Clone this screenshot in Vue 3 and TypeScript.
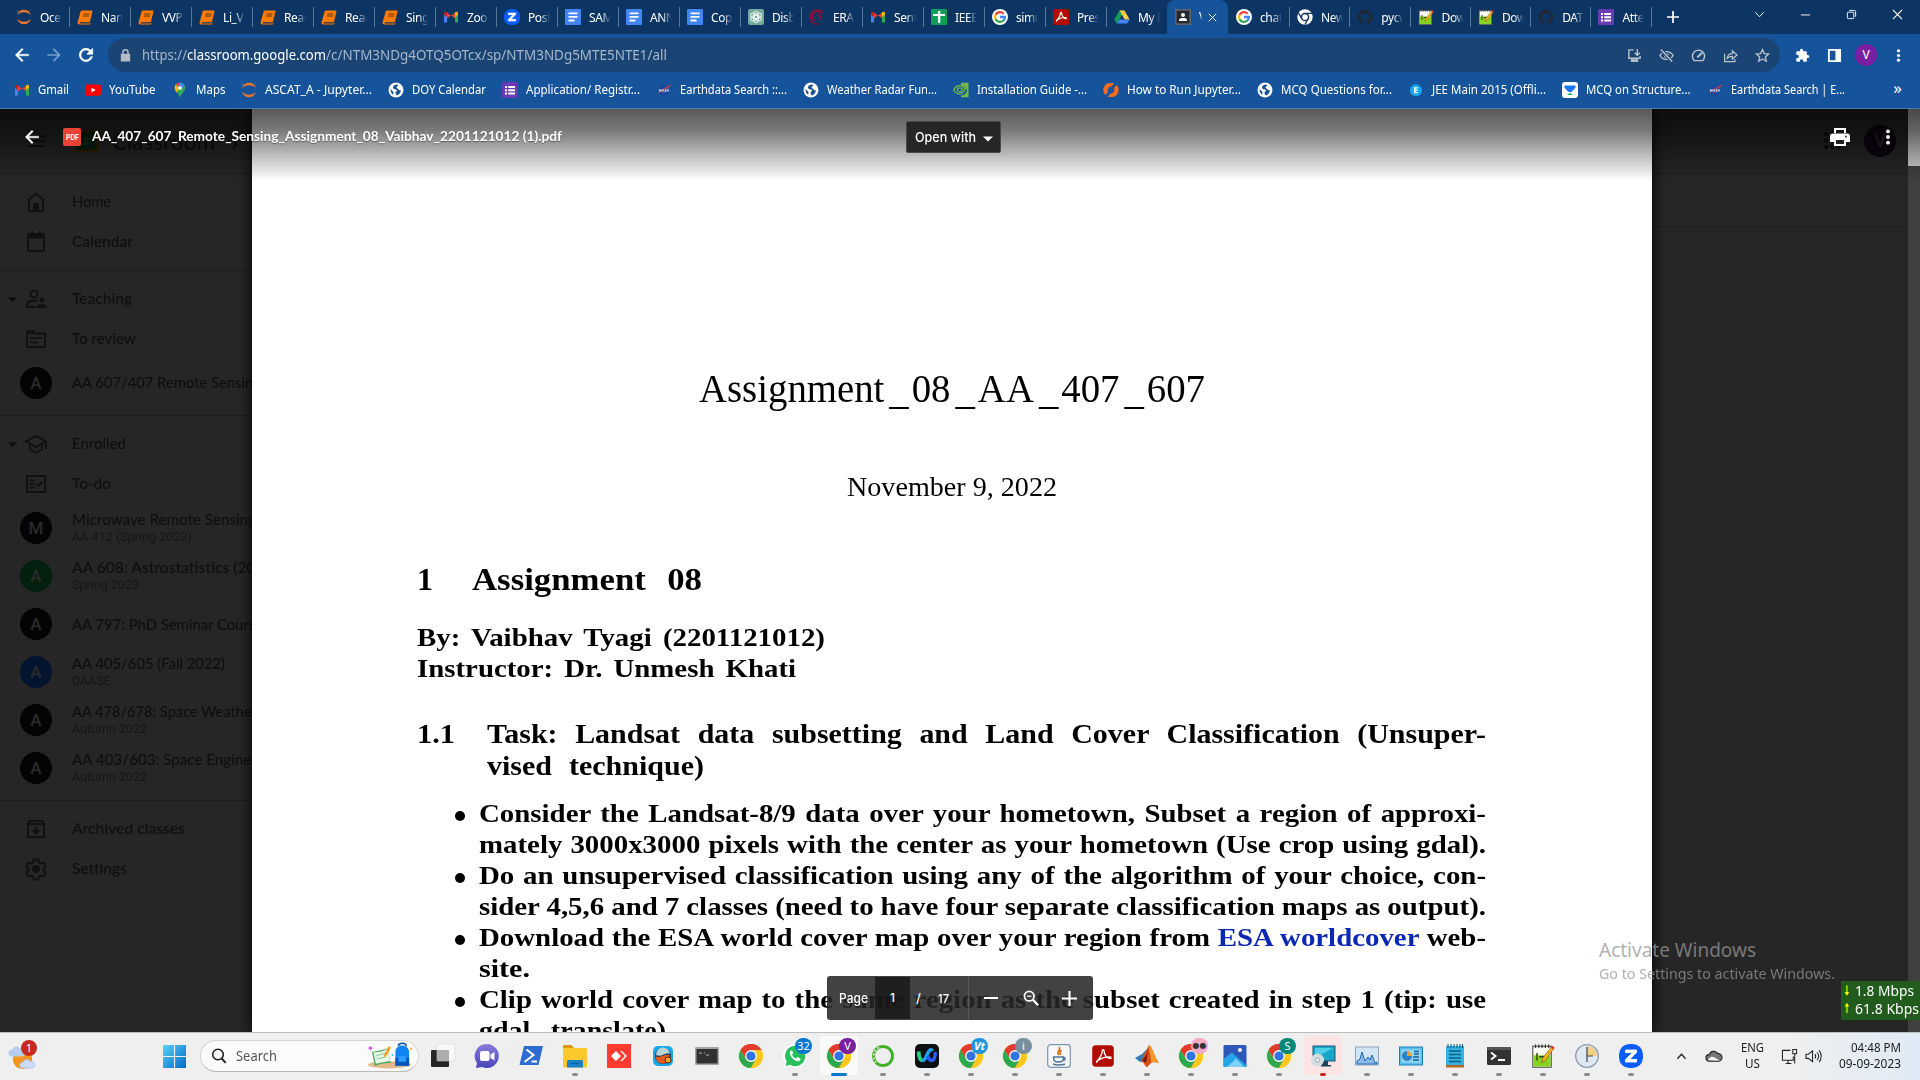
<script setup lang="ts">
interface Tab { icon: string; label: string; active?: boolean }
interface Bookmark { icon: string; label: string; w: number }
interface Course { letter: string; name: string; w: number; sub?: string; sw?: number; tone?: string }
interface App { icon: string; state?: string; badge?: string; tone?: string }

// Stretches a text run to a given width. With a second number the glyphs
// get that fixed stretch and the word gaps take up the rest of the line.
const vFit = {
  mounted(el: HTMLElement, binding: { value: number | number[] }) {
    const v = binding.value
    el.style.display = 'inline-block'
    el.style.whiteSpace = 'pre'
    el.style.transformOrigin = '0 50%'
    el.style.flex = 'none'
    let target: number
    if (Array.isArray(v)) {
      target = v[0]
      const gaps = (el.textContent || '').split(' ').length - 1
      const w = el.offsetWidth
      if (gaps > 0) el.style.wordSpacing = (target / v[1] - w) / gaps + 'px'
    } else {
      target = v
    }
    const natural = el.getBoundingClientRect().width
    el.style.transform = `scaleX(${target / natural})`
    el.style.marginRight = target - natural + 'px'
  },
}

const chrome = '<circle cx="12" cy="12" r="12" fill="#fbc116"/><path d="M12 12 1.6 6A12 12 0 0 1 22.4 6z" fill="#e33b2e"/><path d="M12 6h10.4A12 12 0 0 0 1.6 6L6.8 15z" fill="#e33b2e"/><path d="M1.6 6A12 12 0 0 0 12 24l5.2-9-5.2 3-5.2-3z" fill="#2da94f"/><path d="M22.4 6A12 12 0 0 1 12 24l5.2-9L17 9l-5-3z" fill="#fdc81c"/><circle cx="12" cy="12" r="5.9" fill="#fff"/><circle cx="12" cy="12" r="4.6" fill="#2f74e0"/>'
const git = '<path d="M8 .8a7.3 7.3 0 0 0-2.3 14.2c.4.1.5-.1.5-.4v-1.3c-2 .4-2.5-.9-2.5-.9-.4-.9-.8-1.1-.8-1.1-.7-.5 0-.5 0-.5.8.1 1.2.8 1.2.8.7 1.2 1.8.8 2.2.6.1-.5.3-.8.5-1-1.7-.2-3.4-.8-3.4-3.6 0-.8.3-1.5.8-2-.1-.2-.4-1 0-2 0 0 .7-.2 2.1.8a7 7 0 0 1 3.8 0c1.4-1 2-.8 2-.8.5 1 .2 1.8 0 2 .5.5.8 1.2.8 2 0 2.8-1.7 3.4-3.4 3.6.3.2.5.7.5 1.4v2c0 .3.2.5.5.4A7.3 7.3 0 0 0 8 .8z" fill="#22272e"/>'
const notepad = '<rect x="1.2" y="1.5" width="12.300" height="14" fill="#fbfcf7" stroke="#4a4a4a" stroke-width=".7"/><path d="M1.600 7.500h11.500v7.600H1.600z" fill="#86d321"/><path d="M3 .3v2.400M5.200.3v2.400M7.400.3v2.400M9.600.3v2.400M11.800.3v2.400" stroke="#333" stroke-width=".8"/><path d="M4 6v5M5.500 8.500h3.500" stroke="#33491c" stroke-width="1"/><path d="m7 12.500.8-3L14 1.500l1.500 1.100L9.500 11z" fill="#f4b316" stroke="#8a4d0c" stroke-width=".4"/><path d="m13.200 2.400.8-1.200 1.600 1.200-.8 1.100z" fill="#d93025"/>'
const nasa = '<circle cx="8" cy="8.500" r="5.300" fill="#17479e"/><path d="M2 11C6 7 10 6 14.500 3.200 11 6.500 9 9 6.500 11.500" fill="none" stroke="#e23b3b" stroke-width=".9"/><path d="M3.500 9.500V7.300L5 9.500V7.300M6 9.500l.9-2.200.9 2.200M10.300 7.300H9l1.200 2.200H8.700M11 9.500l.9-2.200.9 2.200" stroke="#fff" stroke-width=".7" fill="none"/>'

const icons: Record<string, [string, string]> = {
  jupyter: ['0 0 16 16', '<path d="M1 6.300C3-1 13-1 15 6.300 12 2.300 4 2.300 1 6.300zM1 9.700C3 17 13 17 15 9.700 12 13.700 4 13.700 1 9.700z" fill="#f37626"/><circle cx="1.800" cy="2.200" r=".7" fill="#888"/><circle cx="14" cy="1.300" r=".6" fill="#777"/>'],
  book: ['0 0 16 16', '<path d="M5 1.500h9.500c.8 0 1.100.4.9 1.200L13.200 12c-.2.8-.6 1.200-1.400 1.200H3.200c-.9 0-.9 1.200 0 1.200h9.400l.5-1 .6.1-.7 2H2.200C.8 15.500.3 14.500.6 13.300L3.500 3c.3-1 .7-1.500 1.500-1.500z" fill="#ff7a00"/><path d="M6.500 5h6M6 7h6" stroke="#5b3a1a" stroke-width="1"/>'],
  gmail: ['0 0 16 16', '<path d="M1 13.500V4.300l3 2.400v6.800z" fill="#4285f4"/><path d="M12 13.500V6.700l3-2.400v9.200z" fill="#34a853"/><path d="M4 10V4l4 3.200L12 4v6l-4-3.200z" fill="#ea4335" transform="translate(0 -.5)"/><path d="M1 4.500C1 2.500 2.600 2.200 4 3.300V8L1 5.700z" fill="#c5221f"/><path d="M12 3.300c1.500-1.100 3-.8 3 1.200v1.200L12 8z" fill="#fbbc04"/>'],
  zoomz: ['0 0 16 16', '<rect x="0" y="0" width="16" height="16" rx="7" fill="#0b5cff"/><path d="M4.300 4h7.400v1.600L7 10.300h4.700V12H4.300v-1.600L9 5.700H4.300z" fill="#fff" stroke="#fff" stroke-width=".6"/>'],
  doc: ['0 0 16 16', '<rect width="16" height="16" rx="1" fill="#4285f4"/><path d="M3.500 3.500h9v1.800h-9zM3.500 7h9v1.800h-9zM3.500 10.600h6v1.800h-6z" fill="#fff"/>'],
  gpt: ['0 0 16 16', '<rect width="16" height="16" rx="2" fill="#74aa9c"/><g fill="none" stroke="#e9f5f1" stroke-width="1"><ellipse cx="8" cy="6" rx="2.500" ry="3.800"/><ellipse cx="8" cy="6" rx="2.500" ry="3.800" transform="rotate(60 8 8)"/><ellipse cx="8" cy="6" rx="2.500" ry="3.800" transform="rotate(120 8 8)"/><ellipse cx="8" cy="6" rx="2.500" ry="3.800" transform="rotate(180 8 8)"/><ellipse cx="8" cy="6" rx="2.500" ry="3.800" transform="rotate(240 8 8)"/><ellipse cx="8" cy="6" rx="2.500" ry="3.800" transform="rotate(300 8 8)"/></g>'],
  era: ['0 0 16 16', '<g fill="none" stroke="#8c1138" stroke-width="1.500"><path d="M14 4A7 7 0 1 0 9 15"/><path d="M12 6a4.500 4.500 0 1 0-5 5.500M8 7c3-1 5 1 4 4"/></g>'],
  sheet: ['0 0 16 16', '<rect width="16" height="16" rx="1" fill="#0f9d58"/><rect x="2" y="5" width="12" height="2" fill="#fff"/><rect x="7" y="2" width="2.300" height="12" fill="#fff"/>'],
  google: ['0 0 16 16', '<circle cx="8" cy="8" r="8" fill="#fff"/><g fill="none" stroke-width="2.300"><path d="M11.600 4.700A4.900 4.900 0 0 0 3.600 5.800" stroke="#ea4335"/><path d="M3.700 5.600a5 5 0 0 0 0 4.800" stroke="#fbbc05"/><path d="M3.600 10.200a4.900 4.900 0 0 0 7.700 1.300" stroke="#34a853"/><path d="M8 8h4.900a4.900 4.900 0 0 1-1.700 3.700" stroke="#4285f4"/></g>'],
  acrobat: ['0 0 16 16', '<rect width="16" height="16" rx="1.500" fill="#b30b00"/><path d="M3.500 12c1.500-2 4-4.500 4-8 0-1 1.200-1 1.200 0 0 3 2 5.500 4 5.700 1 0 1-1.200-.4-1.200-3 0-6 1-8 2.300-1.200.8-1 1.700-.8 1.200z" fill="none" stroke="#fff" stroke-width="1.100"/>'],
  drive: ['0 0 16 16', '<path d="M5.500 1.500h5L5.300 10.500 2.800 14.500.3 10.400z" fill="#0f9d58"/><path d="M5.500 1.500h5l5.200 9h-5z" fill="#ffcd40"/><path d="M5.300 10.500h10.400l-2.500 4H2.800z" fill="#4285f4"/>'],
  classroom: ['0 0 16 16', '<rect width="16" height="16" fill="#5f6368"/><rect x="1.700" y="1.700" width="12.600" height="12.600" fill="#26292c"/><circle cx="8" cy="6" r="2" fill="#fff"/><path d="M4 12v-1c0-2.600 8-2.600 8 0v1z" fill="#fff"/>'],
  chromew: ['0 0 16 16', '<circle cx="8" cy="8" r="7.700" fill="#fff"/><circle cx="8" cy="8" r="3.600" fill="none" stroke="#14365f" stroke-width="1.500"/><path d="M8 4.400h7M4.900 9.800 1.500 4M11.100 9.800 8 15.500" stroke="#14365f" stroke-width="1.300"/>'],
  github: ['0 0 16 16', git],
  notepadpp: ['0 0 16 16', notepad],
  form: ['0 0 16 16', '<rect width="16" height="16" rx="1" fill="#673ab7"/><path d="M3 4h2v2H3zM6.200 4H13v2H6.200zM3 7.200h2v2H3zM6.200 7.200H13v2H6.200zM3 10.400h2v2H3zM6.200 10.400H13v2H6.200z" fill="#fff"/>'],
  youtube: ['0 0 16 16', '<rect x="0" y="2.500" width="16" height="11.300" rx="2.600" fill="#f00"/><path d="m6.500 5.700 4.200 2.400-4.200 2.400z" fill="#fff"/>'],
  maps: ['0 0 16 16', '<path d="M8 .5a5.300 5.300 0 0 0-5.300 5.300c0 3.500 4 5 5.300 10 1.300-5 5.300-6.500 5.300-10A5.300 5.300 0 0 0 8 .5z" fill="#34a853"/><path d="M2.700 6.500a5.300 5.300 0 0 1 1.200-4L8 6l-3.800 4.400z" fill="#fbbc04"/><path d="M4 2.300A5.300 5.300 0 0 1 8 .5l-2 5z" fill="#ea4335"/><path d="M8 .5a5.300 5.300 0 0 1 4.700 2.800L8.500 8 6 5z" fill="#4285f4"/><circle cx="8" cy="5.800" r="1.900" fill="#fff"/>'],
  globe: ['0 0 16 16', '<circle cx="8" cy="8" r="7.500" fill="#fff"/><path d="M9 2.500c-2 0-3.500 1-4 2.500-.4 1.500 1 2.300 3 2.600 1.500.3 1.500 1.600.3 1.900-1.300.4-1 2.500.7 4 2-1 3.500-2.500 4-5-2 .4-2.500-1.500-4-2.200C8 5.700 8.500 4.500 10.500 3.500zM2.500 7l3 3-.3 2.800C3.300 11.500 2.400 9.500 2.500 7z" fill="#17508f"/>'],
  nasa: ['0 0 16 16', nasa],
  nvidia: ['0 0 16 16', '<path d="M8 .8h7.500v14.500H8v-1.700c4-.2 5.500-2.500 6-5C12.500 5 11 3.500 8 3.300z" fill="#76b947"/><g fill="none" stroke="#76b947" stroke-width="1.300"><path d="M.8 8C3 3 9 2 12 7c-2 6-8 6.500-11.200 1z"/><path d="M4 8c1.500-3 4.500-2.500 5.500-.5C8 10.500 5.500 10.500 4 8z"/></g>'],
  saturn: ['0 0 16 16', '<path d="M2.500 13A7 7 0 0 1 8 1h3l-2 3.300A4 4 0 0 0 5 10zM13.500 3A7 7 0 0 1 8 15H5l2-3.300A4 4 0 0 0 11 6z" fill="#ff6b1a"/>'],
  jee: ['0 0 16 16', '<circle cx="8" cy="8.200" r="6" fill="#14a9ee"/><path d="M6 5.200h4v1.300H7.500v1H9.800v1.300H7.500v1.100H10v1.300H6z" fill="#fff"/>'],
  testbook: ['0 0 16 16', '<rect width="16" height="16" rx="3" fill="#fff"/><path d="M2.500 3.500h11v2.200L9.500 10h-3l-4-4.300z" fill="#1877f2"/><path d="m5 13 3-2.200L11 13z" fill="#19b36b"/>'],
  // browser toolbar
  back: ['0 0 24 24', '<path d="M20 11H7.800l5.600-5.600L12 4l-8 8 8 8 1.400-1.400L7.800 13H20z" fill="currentColor" stroke="currentColor" stroke-width=".5"/>'],
  fwd: ['0 0 24 24', '<path d="m12 4-1.400 1.400 5.600 5.600H4v2h12.200l-5.600 5.600L12 20l8-8z" fill="currentColor"/>'],
  reload: ['0 0 24 24', '<path d="M17.700 6.300A8 8 0 1 0 19.700 14h-2.100A6 6 0 1 1 16.200 7.800L13 11h7V4z" fill="currentColor" stroke="currentColor" stroke-width=".8"/>'],
  lock: ['0 0 16 16', '<path d="M4.500 6V4.500a3.500 3.500 0 0 1 7 0V6H13v8.500H3V6zm1.600 0h3.800V4.500a1.900 1.900 0 0 0-3.800 0z" fill="currentColor"/>'],
  install: ['0 0 16 16', '<path d="M7 2H2v9h12V8.500M4.500 14h7" fill="none" stroke="currentColor" stroke-width="1.500"/><path d="M11 1v6.500M8.300 5 11 7.700 13.700 5" fill="none" stroke="currentColor" stroke-width="1.500"/><path d="M4 12h8v2.500H4z" fill="currentColor"/>'],
  eyeoff: ['0 0 16 16', '<path d="M1 8c3-5.500 11-5.500 14 0-3 5.500-11 5.500-14 0z" fill="none" stroke="currentColor" stroke-width="1.500"/><circle cx="8" cy="8" r="2.700" fill="currentColor"/><path d="M2 1.500 14 14.500" stroke="#1a4474" stroke-width="3.500"/><path d="M2 1.500 14 14.500" stroke="currentColor" stroke-width="1.500"/>'],
  speed: ['0 0 16 16', '<path d="M3.500 13.500a6.500 6.500 0 1 1 9 0z" fill="none" stroke="currentColor" stroke-width="1.500"/><path d="m6.800 10 5-5" stroke="currentColor" stroke-width="2.200"/>'],
  share: ['0 0 16 16', '<path d="M1.700 6v8.500h11V12M4.500 11c.5-3.500 2.500-5 5.500-5V3l5 4.500-5 4.300V9C7.500 9 6 9.500 4.500 11z" fill="none" stroke="currentColor" stroke-width="1.300"/>'],
  star: ['0 0 16 16', '<path d="m8 1.700 1.900 4.300 4.600.4-3.500 3.100 1.100 4.600L8 11.700l-4.100 2.400L5 9.500 1.500 6.400 6.100 6z" fill="none" stroke="currentColor" stroke-width="1.400"/>'],
  puzzle: ['0 0 24 24', '<path d="M20.500 11H19V7a2 2 0 0 0-2-2h-4V3.500a2.500 2.500 0 0 0-5 0V5H4a2 2 0 0 0-2 2v3.800h1.500a2.700 2.700 0 0 1 0 5.400H2V20a2 2 0 0 0 2 2h3.800v-1.500a2.700 2.700 0 0 1 5.400 0V22H17a2 2 0 0 0 2-2v-4h1.500a2.500 2.500 0 0 0 0-5z" fill="currentColor"/>'],
  panel: ['0 0 16 16', '<path d="M1 1h14v14H1zm2 2v10h6V3z" fill="currentColor" fill-rule="evenodd"/>'],
  dots: ['0 0 16 16', '<circle cx="8" cy="3" r="1.700" fill="currentColor"/><circle cx="8" cy="8" r="1.700" fill="currentColor"/><circle cx="8" cy="13" r="1.700" fill="currentColor"/>'],
  chevdown: ['0 0 12 12', '<path d="m1.500 3.500 4.500 5 4.500-5" fill="none" stroke="currentColor" stroke-width="1"/>'],
  min: ['0 0 12 12', '<path d="M1 6.500h10" stroke="currentColor" stroke-width="1"/>'],
  restore: ['0 0 12 12', '<rect x="1.500" y="3.500" width="7" height="7" rx="1" fill="none" stroke="currentColor"/><path d="M3.500 1.500H9a1.500 1.500 0 0 1 1.500 1.500v5.500" fill="none" stroke="currentColor"/>'],
  close: ['0 0 12 12', '<path d="m1 1 10 10M11 1 1 11" stroke="currentColor" stroke-width="1.300"/>'],
  plus: ['0 0 12 12', '<path d="M6 0v12M0 6h12" stroke="currentColor" stroke-width="1.700"/>'],
  // classroom sidebar
  home: ['0 0 24 24', '<path d="M5 21V9.500L12 3.500l7 6V21z" fill="none" stroke="currentColor" stroke-width="2"/><path d="M9 13h6v8H9z" fill="currentColor"/>'],
  calendar: ['0 0 24 24', '<path d="M7 1v2H5a2 2 0 0 0-2 2v15c0 1.100.9 2 2 2h14a2 2 0 0 0 2-2V5a2 2 0 0 0-2-2h-2V1h-2v2H9V1zM5 8.500h14V20H5z" fill="currentColor" fill-rule="evenodd"/>'],
  people: ['0 0 24 24', '<g fill="none" stroke="currentColor" stroke-width="2"><circle cx="10" cy="7" r="3.500"/><path d="M13 14c-5-1-10 .5-10 4v2h8"/></g><circle cx="18" cy="13" r="2.500" fill="currentColor"/><path d="M12.500 21v-1.500c0-3 10-3 10 0V21z" fill="currentColor"/>'],
  review: ['0 0 24 24', '<path d="M3 20V4h6l2 2.500h10V20z" fill="none" stroke="currentColor" stroke-width="2"/><path d="M3 4h6l2 3H3zM6 10h12v2H6zM6 14.500h8v2H6z" fill="currentColor"/>'],
  school: ['0 0 24 24', '<path d="m2 9.500 10-5.500 10 5.500-10 5.500zM6 12v5.500l6 3.300 6-3.300V12M22 9.500V17" fill="none" stroke="currentColor" stroke-width="2"/>'],
  todo: ['0 0 24 24', '<rect x="3" y="4" width="18" height="16" fill="none" stroke="currentColor" stroke-width="2"/><path d="M5.500 7.500h5v2h-5zM5.500 11h5v2h-5zM5.500 14.500h5v2h-5z" fill="currentColor"/><path d="m12.500 12 2 2 4-4.300" fill="none" stroke="currentColor" stroke-width="2"/>'],
  archive: ['0 0 24 24', '<path d="M4 7v13h16V7zM4 7l1.500-3h13L20 7" fill="none" stroke="currentColor" stroke-width="2"/><path d="M12 9.500v6M9 13l3 3.200 3-3.200" fill="none" stroke="currentColor" stroke-width="2"/>'],
  gear: ['0 0 24 24', '<path d="m9.700 2.500-.5 2.800-2 1.200-2.700-1-2.300 4 2.200 1.800v2.400l-2.200 1.800 2.300 4 2.700-1 2 1.200.5 2.800h4.600l.5-2.800 2-1.200 2.700 1 2.300-4-2.200-1.800v-2.400l2.200-1.800-2.300-4-2.700 1-2-1.200-.5-2.800z" fill="none" stroke="currentColor" stroke-width="2" stroke-linejoin="round"/><circle cx="12" cy="12" r="4" fill="currentColor"/>'],
  caret: ['0 0 10 10', '<path d="M0 2.500h10L5 7.500z" fill="currentColor"/>'],
  burger: ['0 0 18 12', '<path d="M0 0h18v2H0zM0 5h18v2H0zM0 10h18v2H0z" fill="currentColor"/>'],
  logo: ['0 0 26 22', '<rect width="26" height="22" rx="2" fill="#2a2204"/><rect x="2.500" y="2.500" width="21" height="17" fill="#04200f"/><circle cx="13" cy="9" r="2.500" fill="#0f3520"/><path d="M8 15c0-4 10-4 10 0z" fill="#0f3520"/>'],
  grid: ['0 0 18 18', '<g fill="currentColor"><circle cx="2" cy="2" r="2"/><circle cx="8.500" cy="2" r="2"/><circle cx="15" cy="2" r="2"/><circle cx="2" cy="8.500" r="2"/><circle cx="8.500" cy="8.500" r="2"/><circle cx="15" cy="8.500" r="2"/><circle cx="2" cy="15" r="2"/><circle cx="8.500" cy="15" r="2"/><circle cx="15" cy="15" r="2"/></g>'],
  print: ['0 0 20 18', '<path d="M4 0h12v5H4zM3 5.500h14a3 3 0 0 1 3 3V14h-4v-3H4v3H0V8.500a3 3 0 0 1 3-3z" fill="#fff"/><path d="M6 2h8v3H6z" fill="#151515"/><path d="M4 10.500h12V18H4z" fill="#fff"/><path d="M6 12h8v4H6z" fill="#222"/><circle cx="16" cy="8.500" r="1" fill="#333"/>'],
  zoomout: ['0 0 20 20', '<circle cx="8" cy="8" r="5.300" fill="none" stroke="currentColor" stroke-width="2"/><path d="m12 12 6 6" stroke="currentColor" stroke-width="2.500"/><path d="M5.500 8h5" stroke="currentColor" stroke-width="1.300"/>'],
  // taskbar
  win: ['0 0 24 24', '<defs><linearGradient id="wg" x1="0" y1="0" x2="1" y2="1"><stop offset="0" stop-color="#5ad0fa"/><stop offset="1" stop-color="#0069c5"/></linearGradient></defs><path d="M0 0h11.400v11.400H0zM12.600 0H24v11.400H12.600zM0 12.600h11.400V24H0zM12.600 12.600H24V24H12.600z" fill="url(#wg)"/>'],
  weather: ['0 0 28 28', '<circle cx="14" cy="17" r="10" fill="#f7941d"/><path d="M3 14a3.500 3.500 0 0 1 0-7 5 5 0 0 1 9-1 4 4 0 0 1 1 8z" fill="#b7cdf0"/><path d="M14 26a3 3 0 0 1 0-6 4.500 4.500 0 0 1 8-1 3.500 3.500 0 0 1 2 7z" fill="#cbdaf5" stroke="#9bb4e0" stroke-width=".6"/>'],
  mag: ['0 0 16 16', '<circle cx="7" cy="6.500" r="5.300" fill="none" stroke="#222" stroke-width="1.600"/><path d="m10.700 10.500 4 4.300" stroke="#222" stroke-width="1.900"/>'],
  supplies: ['0 0 46 26', '<ellipse cx="22" cy="22" rx="22" ry="3.700" fill="#e3b98a"/><path d="m4 9 9-2 7-2 3 15-9 1-7 2z" fill="#4da765"/><path d="m5.500 9.500 8-1 6.500-3 2.500 12.500-7 1.500-7.500 1.500z" fill="#e8f6e4"/><path d="m8 13 10-3M9 16l9-2" stroke="#8ac79a" stroke-width="1"/><path d="m16 13 5-10 2.500 1.200L18 14z" fill="#f6a21d"/><path d="M31 3c0-4 8-4 8 0" stroke="#0a52ad" stroke-width="1.700" fill="none"/><path d="M28 9c0-9 14-9 14 0v14H28z" fill="#1184f5"/><path d="M28 15h14v8H28z" fill="#0757b9"/><rect x="31" y="13" width="8" height="6" rx="1" fill="#2d9bff"/><path d="M2.500 3v4M.5 5h4" stroke="#d45cf0" stroke-width="1.700"/><circle cx="44" cy="5.500" r="1.200" fill="#fdb81e"/><circle cx="25" cy="12" r="1" fill="#32c6f0"/>'],
  taskview: ['0 0 24 24', '<rect x="0" y="6" width="18" height="17" rx="1" fill="#252525"/><rect x="6" y="0" width="18" height="17" rx="1" fill="#f8f8f8" stroke="#d8d8d8" stroke-width=".6"/><path d="M6 6h12v11H6z" fill="#adadad"/>'],
  chat: ['0 0 24 24', '<defs><linearGradient id="cg" x1="0" y1="0" x2="0" y2="1"><stop offset="0" stop-color="#8a7bdc"/><stop offset="1" stop-color="#4a45b8"/></linearGradient></defs><path d="M12 0a12 12 0 1 1-5 23L1 24l1-5A12 12 0 0 1 12 0z" fill="url(#cg)"/><rect x="5" y="7" width="9.500" height="10" rx="2" fill="#fff"/><path d="m15.500 10.500 4-2.500v8.500l-4-2.500z" fill="#fff"/>'],
  pshell: ['0 0 24 24', '<path d="M5 2h19l-4.500 19H.5z" fill="#2d6bd0"/><path d="m7.500 5.500 7 5.500-9 7M12.500 17.500h5.500" fill="none" stroke="#fff" stroke-width="2"/>'],
  folder: ['0 0 24 24', '<path d="M0 2.500C0 1.500.5 1 1.500 1h7L11 4H0z" fill="#d99a12"/><path d="M0 4h22.500c1 0 1.500.5 1.500 1.500V22c0 1-.5 1.500-1.500 1.500h-21C.5 23.500 0 23 0 22z" fill="#fcc82c"/><path d="M4 23.500V18c0-1.500.7-2 2-2h12c1.300 0 2 .5 2 2v5.500z" fill="#1783cf"/><path d="M8 19.500h8" stroke="#0b5f9f" stroke-width="1.200"/>'],
  anydesk: ['0 0 24 24', '<rect width="24" height="24" fill="#ff3b30"/><path d="m9 7 5 5-5 5-5-5zM13 7h2l5 5-5 5h-2l5-5z" fill="#fff"/>'],
  capture: ['0 0 24 24', '<rect x="2" y="2" width="20" height="20" rx="5" fill="#15a8ea"/><circle cx="12" cy="12" r="8" fill="#19335c"/><path d="M5 11a7 7 0 0 1 14-1c-4-3-8 4-14 1z" fill="#b9d3d4"/><path d="M4.500 12c4 3 9-2 14-1a7 7 0 0 1-13 5z" fill="#e55a17"/><circle cx="17" cy="16" r="3" fill="#f5a623" stroke="#5a230c"/>'],
  cmd: ['0 0 24 24', '<rect x="0" y="3" width="24" height="18" rx="1" fill="#a4a4a4"/><rect x="1.500" y="5" width="21" height="14.500" fill="#303030"/><path d="M4 9h3M9 9h1M11 11h3" stroke="#bbb" stroke-width="1"/>'],
  chrome: ['0 0 24 24', chrome],
  whatsapp: ['0 0 24 24', '<path d="M12 0a12 12 0 1 1-5.700 22.600L0 24l1.500-6A12 12 0 0 1 12 0z" fill="#fff"/><path d="M12 1.800a10.200 10.200 0 1 1-5 19L2.500 22l1.200-4.500A10.200 10.200 0 0 1 12 1.800z" fill="#25c15b"/><path d="M8 6.500c-3 2 0 6.500 2.500 8.700 2.500 2.200 6 3.300 7 .5.500-1.500-3-3-3.700-2.300l-.8 1c-1.500-.5-3.500-2.500-4-4l1-1C10.500 8.500 9 6 8 6.500z" fill="#fff"/>'],
  anaconda: ['0 0 24 24', '<circle cx="12" cy="12" r="9.500" fill="none" stroke="#43b02a" stroke-width="3"/><path d="M8 3.500A9.500 9.500 0 0 0 5 18.500" fill="none" stroke="#efefef" stroke-width="1.500" stroke-dasharray="2 2"/>'],
  webex: ['0 0 24 24', '<rect width="24" height="24" rx="5" fill="#0d0f12"/><g fill="none" stroke-width="3.500"><path d="M3.500 8c1 12 6 9 8 4s4-8 6-5" stroke="#1aa0f0"/><path d="M20.500 8c-1 12-6 9-8 4" stroke="#2c5df2"/><path d="M3.500 7.500c.5 6 1.500 8 3.500 9" stroke="#28d17c"/></g>'],
  java: ['0 0 24 24', '<rect x=".7" y=".7" width="22.600" height="22.600" rx="3" fill="#f7f7f7" stroke="#7b94b0" stroke-width="1.200"/><path d="M12 3c3 3-4 4 0 8M14.500 6c-3 2-1 3-1 5" fill="none" stroke="#e46f1c" stroke-width="1.600"/><path d="M6.500 13h10c0 4-1 5-5 5s-5-1-5-5zM16.500 13.500c3 0 2 3-1 3M6 20c3 1.300 9 1.300 12 0" fill="none" stroke="#4d7598" stroke-width="1.400"/>'],
  matlab: ['0 0 24 24', '<path d="m0 14 7-4 5-5 2-4-4 16-5 1z" fill="#2f7fb5"/><path d="M14 1c-1 4-5 8-6 12l-2 5c3-1 4 5 6 5 3-2 5-8 12-4C19 13 18 3 14 1z" fill="#d94f1a"/><path d="M14 1c0 8 2 10 2 17l8 1C19 13 18 3 14 1z" fill="#f29b27"/><path d="M14 1c-1 8-3 12-7 15l4 3z" fill="#6b1b0c"/>'],
  photos: ['0 0 24 24', '<rect x=".5" y="1" width="23" height="22" rx="1.500" fill="#2c57b8"/><circle cx="17" cy="6" r="2" fill="#fff"/><path d="M.5 15 9 8.500l14.500 13V23H.5z" fill="#27a5ea"/><path d="m4 23 9-8.500 8 8.500z" fill="#7fd3fa"/>'],
  remote: ['0 0 24 24', '<rect x="2" y="2" width="22" height="15" fill="#1aa6c9" stroke="#1b5572" stroke-width="1"/><path d="M4 4h18L4 14z" fill="#4fd0e4"/><path d="M12 17h5v4h-7z" fill="#1b4157"/><path d="M10 21h10v1.500H10z" fill="#1b4157"/><circle cx="6.500" cy="16" r="6.500" fill="#d4dbe2"/><circle cx="6.500" cy="16" r="2" fill="#fff" stroke="#97a3ae"/>'],
  perf: ['0 0 24 24', '<rect x=".5" y="3" width="23" height="18" fill="#d3e5f3" stroke="#8ea4b7"/><path d="m2 17 3-2 2-7 3 9 3-4 2 3 2-5 3 8 2-1v2H2z" fill="#8bbbe8" stroke="#1e66b0" stroke-width="1"/>'],
  control: ['0 0 24 24', '<rect x=".5" y="3" width="23" height="18" fill="#5cc0ee" stroke="#1c7fb6"/><rect x="2.500" y="5.500" width="19" height="13" fill="#8fd6f7"/><circle cx="8" cy="12" r="5" fill="#f4a12b"/><path d="M8 7a5 5 0 1 0 5 5H8z" fill="#2484d2"/><path d="M15 7.500h5M15 10h5M14 13h6M14 16h6" stroke="#0f5f9f" stroke-width="1.300"/>'],
  notes: ['0 0 24 24', '<path d="M3 2h18v19H3z" fill="#35b3e0"/><path d="M5 0v4M8 0v4M11 0v4M14 0v4M17 0v4M19.500 0v4" stroke="#0c5877" stroke-width="1"/><path d="M6 7h12M6 10.500h12M6 14h12M6 17.500h12" stroke="#0b6285" stroke-width="1.300"/><path d="M3 21h18v2.500H3z" fill="#b5651d"/>'],
  terminal: ['0 0 24 24', '<rect y="3" width="24" height="18" rx="1.500" fill="#333"/><path d="M0 3h24v3H0z" fill="#555"/><path d="m4 8.500 4.500 3.500L4 15.500M11 16h7" fill="none" stroke="#fff" stroke-width="1.900"/>'],
  clock: ['0 0 24 24', '<circle cx="12" cy="12" r="11.300" fill="#dfe9f3" stroke="#8b99a8" stroke-width="1.300"/><path d="M12 2v10h10A10 10 0 0 0 12 2z" fill="#f2cf86"/><path d="M12 3v9h6M12 12v6" stroke="#444" stroke-width="1.200" fill="none"/>'],
  acro24: ['0 0 16 16', '<rect x=".8" y=".8" width="14.400" height="14.400" rx="2.500" fill="#b30b00"/><path d="M3.800 12c1.500-2 3.700-4.500 3.700-7.500 0-1 1.200-1 1.200 0 0 2.700 2 5 4 5.200 1 0 1-1.100-.4-1.100-3 0-5.500.9-7.500 2.200-1.200.7-1.200 1.700-1 1.200z" fill="none" stroke="#fff" stroke-width=".9"/>'],
  up: ['0 0 12 12', '<path d="m1.500 8.500 4.500-5 4.500 5" fill="none" stroke="#222" stroke-width="1.400"/>'],
  cloud: ['0 0 18 14', '<path d="M4.500 12.500a3.500 3.500 0 0 1 0-7 5 5 0 0 1 9-1 4 4 0 0 1 1 8z" fill="#777" stroke="#222" stroke-width="1.200"/><path d="M3 11.500c3-5 5-5 12.500.5z" fill="#f0f0f0"/>'],
  monitor: ['0 0 18 18', '<path d="M10 2.500H1.500v10.500H13V9M5 16.500h6M7.500 13v3.500M12.500 1.500h4V6h-4zM14.500 6v10.500" fill="none" stroke="#222" stroke-width="1.100"/>'],
  sound: ['0 0 18 16', '<path d="M1 5.500v4.500h2.500L8 13.500V2L3.500 5.500zM10.500 5.500c1.200 1.500 1.200 3 0 4.500M12.700 3.500c2.200 2.500 2.200 6 0 8.500M15 1.500c3 3.500 3 9 0 12.500" fill="none" stroke="#222" stroke-width="1.100"/>'],
}

const tabs: Tab[] = [
  { icon: 'jupyter', label: 'Oce' }, { icon: 'book', label: 'Nan' }, { icon: 'book', label: 'VVP' },
  { icon: 'book', label: 'Li_V' }, { icon: 'book', label: 'Read' }, { icon: 'book', label: 'Read' },
  { icon: 'book', label: 'Sing' }, { icon: 'gmail', label: 'Zoo' }, { icon: 'zoomz', label: 'Post' },
  { icon: 'doc', label: 'SAM' }, { icon: 'doc', label: 'ANN' }, { icon: 'doc', label: 'Cop' },
  { icon: 'gpt', label: 'Disb' }, { icon: 'era', label: 'ERA' }, { icon: 'gmail', label: 'Sent' },
  { icon: 'sheet', label: 'IEEE' }, { icon: 'google', label: 'simu' }, { icon: 'acrobat', label: 'Pres' },
  { icon: 'drive', label: 'My D' }, { icon: 'classroom', label: 'V', active: true }, { icon: 'google', label: 'chat' },
  { icon: 'chromew', label: 'New' }, { icon: 'github', label: 'pycw' }, { icon: 'notepadpp', label: 'Dow' },
  { icon: 'notepadpp', label: 'Dow' }, { icon: 'github', label: 'DAT' }, { icon: 'form', label: 'Atte' },
]

const bookmarks: Bookmark[] = [
  { icon: 'gmail', label: 'Gmail', w: 31 }, { icon: 'youtube', label: 'YouTube', w: 46.5 },
  { icon: 'maps', label: 'Maps', w: 29.5 }, { icon: 'jupyter', label: 'ASCAT_A - Jupyter...', w: 107 },
  { icon: 'globe', label: 'DOY Calendar', w: 74 }, { icon: 'form', label: 'Application/ Registr...', w: 114 },
  { icon: 'nasa', label: 'Earthdata Search ::...', w: 107 }, { icon: 'globe', label: 'Weather Radar Fun...', w: 110 },
  { icon: 'nvidia', label: 'Installation Guide -...', w: 110 }, { icon: 'saturn', label: 'How to Run Jupyter...', w: 114 },
  { icon: 'globe', label: 'MCQ Questions for...', w: 111 }, { icon: 'jee', label: 'JEE Main 2015 (Offli...', w: 114 },
  { icon: 'testbook', label: 'MCQ on Structure...', w: 104.5 }, { icon: 'nasa', label: 'Earthdata Search | E...', w: 114 },
]

const courses: Course[] = [
  { letter: 'M', name: 'Microwave Remote Sensing', w: 184, sub: 'AA 412 (Spring 2023)', sw: 120 },
  { letter: 'A', name: 'AA 608: Astrostatistics (2022)', w: 206, sub: 'Spring 2023', sw: 67, tone: '#031f0d' },
  { letter: 'A', name: 'AA 797: PhD Seminar Course', w: 191 },
  { letter: 'A', name: 'AA 405/605 (Fall 2022)', w: 153, sub: 'DAASE', sw: 39, tone: '#04142e' },
  { letter: 'A', name: 'AA 478/678: Space Weather', w: 185, sub: 'Autumn 2022', sw: 75 },
  { letter: 'A', name: 'AA 403/603: Space Engineering', w: 213, sub: 'Autumn 2022', sw: 75 },
]

const apps: App[] = [
  { icon: 'taskview' }, { icon: 'chat' }, { icon: 'pshell' }, { icon: 'folder', state: 'run' }, { icon: 'anydesk' },
  { icon: 'capture' }, { icon: 'cmd' }, { icon: 'chrome' }, { icon: 'whatsapp', state: 'run', badge: '32', tone: '#0078d4' },
  { icon: 'chrome', state: 'active', badge: 'V', tone: '#7b1fa2' }, { icon: 'anaconda', state: 'run' },
  { icon: 'webex', state: 'run' }, { icon: 'chrome', state: 'run', badge: 'Vt', tone: '#2196dc' },
  { icon: 'chrome', state: 'run', badge: 'i', tone: '#78909c' }, { icon: 'java', state: 'run' },
  { icon: 'acro24', state: 'run' }, { icon: 'matlab', state: 'run' },
  { icon: 'chrome', state: 'run', badge: '●●', tone: '#f5a9c4' }, { icon: 'photos', state: 'run' },
  { icon: 'chrome', state: 'run', badge: 'S', tone: '#00897b' }, { icon: 'remote', state: 'alert' },
  { icon: 'perf', state: 'run' }, { icon: 'control', state: 'run' }, { icon: 'notes', state: 'run' },
  { icon: 'terminal', state: 'run' }, { icon: 'notepadpp', state: 'run' }, { icon: 'clock', state: 'run' },
  { icon: 'zoomz', state: 'run' },
]

// horizontal stretch of the document's bold face
const S = 1.11
</script>

<template>
  <div class="screen">
    <header class="tabs">
      <div v-for="(t, i) in tabs" :key="i" class="tab" :class="{ active: t.active, late: i > 20, nodiv: i === 18 }">
        <svg class="i16" :viewBox="icons[t.icon][0]" v-html="icons[t.icon][1]" />
        <span class="tab-label">{{ t.label }}</span>
        <svg v-if="t.active" class="tab-x" :viewBox="icons.close[0]" v-html="icons.close[1]" />
      </div>
      <svg class="newtab" :viewBox="icons.plus[0]" v-html="icons.plus[1]" />
      <div class="winctl">
        <span v-for="n in ['chevdown', 'min', 'restore', 'close']" :key="n">
          <svg :viewBox="icons[n][0]" v-html="icons[n][1]" />
        </span>
      </div>
    </header>

    <nav class="toolbar">
      <div class="navs">
        <span><svg :viewBox="icons.back[0]" v-html="icons.back[1]" /></span>
        <span class="dim"><svg :viewBox="icons.fwd[0]" v-html="icons.fwd[1]" /></span>
        <span><svg :viewBox="icons.reload[0]" v-html="icons.reload[1]" /></span>
      </div>
      <div class="omni">
        <svg class="lock" :viewBox="icons.lock[0]" v-html="icons.lock[1]" />
        <span v-fit="45" class="url">https://</span><span v-fit="139" class="url host">classroom.google.com</span><span v-fit="341" class="url">/c/NTM3NDg4OTQ5OTcx/sp/NTM3NDg5MTE5NTE1/all</span>
        <div class="omni-icons">
          <span v-for="n in ['install', 'eyeoff', 'speed', 'share', 'star']" :key="n"><svg :viewBox="icons[n][0]" v-html="icons[n][1]" /></span>
        </div>
      </div>
      <div class="exts">
        <span><svg :viewBox="icons.puzzle[0]" v-html="icons.puzzle[1]" /></span>
        <span><svg :viewBox="icons.panel[0]" v-html="icons.panel[1]" /></span>
        <span><b class="me">V</b></span>
        <span><svg :viewBox="icons.dots[0]" v-html="icons.dots[1]" /></span>
      </div>
    </nav>

    <nav class="marks">
      <div v-for="(b, i) in bookmarks" :key="i" class="mark">
        <svg class="i16" :viewBox="icons[b.icon][0]" v-html="icons[b.icon][1]" />
        <span v-fit="b.w">{{ b.label }}</span>
      </div>
      <span class="more">»</span>
    </nav>

    <main class="stage">
      <section class="classroom">
        <div class="c-head">
          <svg class="burger" :viewBox="icons.burger[0]" v-html="icons.burger[1]" />
          <svg class="c-logo" :viewBox="icons.logo[0]" v-html="icons.logo[1]" />
          <span v-fit="103" class="c-name">Classroom</span>
          <span class="c-sep">›</span>
          <svg class="c-grid" :viewBox="icons.grid[0]" v-html="icons.grid[1]" />
          <span class="c-me">V</span>
        </div>
        <div class="c-body">
          <aside class="side">
            <div class="grp g1">
              <div class="row"><svg class="ic" :viewBox="icons.home[0]" v-html="icons.home[1]" /><span v-fit="39">Home</span></div>
              <div class="row"><svg class="ic" :viewBox="icons.calendar[0]" v-html="icons.calendar[1]" /><span v-fit="61">Calendar</span></div>
            </div>
            <div class="grp g2">
              <div class="row"><svg class="car" :viewBox="icons.caret[0]" v-html="icons.caret[1]" /><svg class="ic" :viewBox="icons.people[0]" v-html="icons.people[1]" /><span v-fit="60">Teaching</span></div>
              <div class="row"><svg class="ic" :viewBox="icons.review[0]" v-html="icons.review[1]" /><span v-fit="64">To review</span></div>
              <div class="row tall"><i class="ava">A</i><span v-fit="189">AA 607/407 Remote Sensing</span></div>
            </div>
            <div class="grp g3">
              <div class="row"><svg class="car" :viewBox="icons.caret[0]" v-html="icons.caret[1]" /><svg class="ic" :viewBox="icons.school[0]" v-html="icons.school[1]" /><span v-fit="54">Enrolled</span></div>
              <div class="row"><svg class="ic" :viewBox="icons.todo[0]" v-html="icons.todo[1]" /><span v-fit="39">To-do</span></div>
              <div v-for="(c, i) in courses" :key="i" class="row tall">
                <i class="ava" :style="{ background: c.tone || '#040404' }">{{ c.letter }}</i>
                <div class="two"><span v-fit="c.w">{{ c.name }}</span><small v-if="c.sub" v-fit="c.sw || 0">{{ c.sub }}</small></div>
              </div>
            </div>
            <div class="grp g4">
              <div class="row"><svg class="ic" :viewBox="icons.archive[0]" v-html="icons.archive[1]" /><span v-fit="113">Archived classes</span></div>
              <div class="row"><svg class="ic" :viewBox="icons.gear[0]" v-html="icons.gear[1]" /><span v-fit="55">Settings</span></div>
            </div>
          </aside>
          <div class="c-tabs" />
        </div>
      </section>

      <section class="sheet-wrap">
        <article class="pdf">
          <div class="title"><span v-fit="506">Assignment<u>_</u>08<u>_</u>AA<u>_</u>407<u>_</u>607</span></div>
          <div class="date"><span v-fit="210">November 9, 2022</span></div>
          <div class="h1"><span v-fit="16" class="num">1</span><span v-fit="[230, 1.12]">Assignment 08</span></div>
          <div class="by">
            <div><span v-fit="[408, S]">By: Vaibhav Tyagi (2201121012)</span></div>
            <div><span v-fit="[379, S]">Instructor: Dr. Unmesh Khati</span></div>
          </div>
          <div class="h2">
            <span v-fit="38" class="num">1.1</span>
            <div>
              <div><span v-fit="[999, S]">Task: Landsat data subsetting and Land Cover Classification (Unsuper-</span></div>
              <div><span v-fit="[217, S]">vised technique)</span></div>
            </div>
          </div>
          <ul>
            <li>
              <div><span v-fit="[1007, S]">Consider the Landsat-8/9 data over your hometown, Subset a region of approxi-</span></div>
              <div><span v-fit="[1007, S]">mately 3000x3000 pixels with the center as your hometown (Use crop using gdal).</span></div>
            </li>
            <li>
              <div><span v-fit="[1007, S]">Do an unsupervised classification using any of the algorithm of your choice, con-</span></div>
              <div><span v-fit="[1007, S]">sider 4,5,6 and 7 classes (need to have four separate classification maps as output).</span></div>
            </li>
            <li>
              <div><span v-fit="[1007, S]">Download the ESA world cover map over your region from <a>ESA worldcover</a> web-</span></div>
              <div><span v-fit="51">site.</span></div>
            </li>
            <li>
              <div><span v-fit="[1007, S]">Clip world cover map to the same region as the subset created in step 1 (tip: use</span></div>
              <div><span v-fit="194">gdal<u class="sm">_</u>translate).</span></div>
            </li>
          </ul>
        </article>
      </section>

      <section class="scroll"><div /></section>

      <section class="viewer">
        <div class="v-head">
          <svg class="v-back" :viewBox="icons.back[0]" v-html="icons.back[1]" />
          <span class="v-pdf"><b v-fit="13">PDF</b></span>
          <span v-fit="470" class="v-name">AA_407_607_Remote_Sensing_Assignment_08_Vaibhav_2201121012 (1).pdf</span>
          <div class="v-open"><span v-fit="61">Open with</span><svg :viewBox="icons.caret[0]" v-html="icons.caret[1]" /></div>
          <svg class="v-print" :viewBox="icons.print[0]" v-html="icons.print[1]" />
          <svg class="v-dots" :viewBox="icons.dots[0]" v-html="icons.dots[1]" />
        </div>
        <div class="v-bar">
          <span class="p-lab"><span v-fit="29">Page</span></span>
          <span class="p-in">1</span>
          <span class="p-sl">/</span>
          <span class="p-tot"><span v-fit="11">17</span></span>
          <span class="p-btn first"><i class="minus" /></span>
          <span class="p-btn"><svg :viewBox="icons.zoomout[0]" v-html="icons.zoomout[1]" /></span>
          <span class="p-btn"><svg class="pl" :viewBox="icons.plus[0]" v-html="icons.plus[1]" /></span>
        </div>
      </section>

      <section class="osd">
        <div class="activate">
          <div class="a1"><span v-fit="157">Activate Windows</span></div>
          <div class="a2"><span v-fit="236">Go to Settings to activate Windows.</span></div>
        </div>
        <div class="net">
          <div><i>🠗</i><span v-fit="59">1.8 Mbps</span></div>
          <div><i>🠕</i><span v-fit="64">61.8 Kbps</span></div>
        </div>
      </section>
    </main>

    <footer class="task">
      <div class="wx"><svg :viewBox="icons.weather[0]" v-html="icons.weather[1]" /><b>1</b></div>
      <svg class="start" :viewBox="icons.win[0]" v-html="icons.win[1]" />
      <div class="search">
        <svg class="mg" :viewBox="icons.mag[0]" v-html="icons.mag[1]" />
        <span v-fit="41">Search</span>
        <svg class="sc" :viewBox="icons.supplies[0]" v-html="icons.supplies[1]" />
      </div>
      <div class="apps">
        <div v-for="(a, i) in apps" :key="i" class="app" :class="a.state">
          <svg :viewBox="icons[a.icon][0]" v-html="icons[a.icon][1]" />
          <b v-if="a.badge" :style="{ background: a.tone }" :class="{ dark: a.badge === '●●', it: a.badge === 'Vt' }">{{ a.badge }}</b>
        </div>
      </div>
      <div class="tray">
        <svg class="t1" :viewBox="icons.up[0]" v-html="icons.up[1]" />
        <svg class="t2" :viewBox="icons.cloud[0]" v-html="icons.cloud[1]" />
        <div class="lang"><span v-fit="23">ENG</span><span v-fit="15">US</span></div>
        <svg class="t3" :viewBox="icons.monitor[0]" v-html="icons.monitor[1]" />
        <svg class="t4" :viewBox="icons.sound[0]" v-html="icons.sound[1]" />
        <div class="clock"><span v-fit="50">04:48 PM</span><span v-fit="62">09-09-2023</span></div>
      </div>
    </footer>
  </div>
</template>

<style>
body { margin: 0; overflow: hidden; }
</style>

<style scoped>
.screen { width: 1920px; height: 1080px; display: flex; flex-direction: column; overflow: hidden; font-family: "Noto Sans", "Open Sans", sans-serif; font-size: 12px; color: #fff; }
svg { display: block; flex: none; overflow: visible; }
.i16 { width: 16px; height: 16px; }

.tabs { height: 34px; background: #0c3563; display: flex; align-items: center; padding-left: 8px; flex: none; }
.tab { width: 61px; height: 34px; box-sizing: border-box; padding-left: 8px; display: flex; align-items: center; position: relative; flex: none; }
.tab.late { width: 60.3px; }
.tab::after { content: ""; position: absolute; right: -1px; top: 7px; width: 1px; height: 20px; background: #587594; }
.tab.active::after, .tab.nodiv::after { display: none; }
.tab-label { width: 22px; margin-left: 8px; overflow: hidden; white-space: nowrap; font-size: 12px; letter-spacing: -.4px; mask-image: linear-gradient(90deg, #000 55%, transparent); }
.tab.active { background: #15539b; border-radius: 8px 8px 0 0; }
.tab.active .tab-label { width: 3px; margin-left: 8px; height: 8px; line-height: 10px; align-self: flex-start; margin-top: 12px; }
.tab-x { width: 9px; height: 9px; margin-left: 6px; }
.newtab { width: 12px; height: 12px; margin-left: 16px; }
.winctl { margin-left: auto; display: flex; }
.winctl span { width: 46px; display: flex; justify-content: center; padding-bottom: 5px; }
.winctl svg { width: 11px; height: 11px; }

.toolbar { height: 42px; background: #15539b; display: flex; align-items: center; flex: none; }
.navs { width: 108px; display: flex; padding-left: 6px; box-sizing: border-box; }
.navs span { width: 32px; display: flex; justify-content: center; }
.navs svg { width: 20px; height: 20px; }
.dim { color: #7a9fcb; }
.omni { width: 1672px; height: 34px; border-radius: 17px; background: #1a4474; display: flex; align-items: center; box-sizing: border-box; padding-left: 10px; font-size: 13.5px; color: #a6b7ca; }
.host { color: #fff; }
.lock { width: 15px; height: 15px; margin-right: 9px; color: #b5bcc5; }
.omni-icons { margin-left: auto; display: flex; color: #bcc4cd; padding-right: 2px; }
.omni-icons span, .exts span { width: 32px; display: flex; justify-content: center; align-items: center; }
.omni-icons svg { width: 15px; height: 15px; }
.exts { display: flex; padding-left: 6px; }
.exts svg { width: 15px; height: 15px; }
.me { width: 22px; height: 22px; border-radius: 50%; background: #7b1fa2; font: 12px/22px Roboto, sans-serif; text-align: center; }

.marks { height: 33px; background: #15539b; border-bottom: 1px solid #4a7ab5; display: flex; align-items: center; gap: 16px; padding: 0 0 5px 14px; box-sizing: border-box; flex: none; }
.mark { display: flex; align-items: center; gap: 8px; }
.mark > span { margin-top: -1px; }
.more { margin-left: auto; margin-right: 18px; margin-top: -3px; font-size: 17px; line-height: 16px; }

.stage { flex: 1; height: 923px; display: grid; grid-template: 923px / 1920px; overflow: hidden; background: #262626; }
.stage > section { grid-area: 1 / 1; min-width: 0; min-height: 0; }

.classroom { color: #0e0e0e; font-family: Lato, "Open Sans", sans-serif; font-size: 15px; font-weight: 500; }
.c-head { height: 64px; border-bottom: 1px solid #1e1e1e; display: flex; align-items: center; padding-left: 27px; }
.burger { width: 18px; height: 12px; }
.c-logo { width: 26px; height: 22px; margin: 0 13px 0 28px; }
.c-name { font-size: 23px; }
.c-sep { font-size: 26px; margin-left: 16px; }
.c-grid { width: 18px; height: 18px; margin-left: auto; color: #080808; }
.c-me { width: 32px; height: 32px; border-radius: 50%; background: #0c0410; text-align: center; line-height: 32px; margin: 0 24px 0 22px; color: #2a2430; font-size: 17px; }
.c-body { display: flex; }
.side { width: 252px; flex: none; overflow: hidden; }
.c-tabs { flex: 1; height: 52px; border-bottom: 1px solid #1d1d1d; }
.grp { border-bottom: 1px solid #1d1d1d; box-sizing: border-box; }
.g1 { height: 97px; padding-top: 8px; }
.g2 { height: 145px; padding-top: 8px; }
.g3 { height: 385px; padding-top: 8px; }
.g4 { border: 0; padding-top: 8px; }
.row { height: 40px; display: flex; align-items: center; position: relative; padding-left: 72px; }
.row > span { margin-top: -2px; }
.row.tall { height: 48px; }
.ic { width: 24px; height: 24px; position: absolute; left: 24px; color: #111; }
.car { width: 9px; height: 9px; position: absolute; left: 8px; color: #0c0c0c; }
.ava { position: absolute; left: 20px; width: 32px; height: 32px; border-radius: 50%; background: #040404; color: #2b2b2b; font: 500 17px/32px Roboto, sans-serif; text-align: center; }
.two { display: flex; flex-direction: column; align-items: flex-start; line-height: 18px; }
.two small { font: 12px/18px Roboto, sans-serif; color: #161616; }

.sheet-wrap { display: flex; padding-left: 252px; overflow: hidden; z-index: 1; }
.pdf { width: 1400px; height: 923px; overflow: hidden; background: #fff; box-shadow: 0 0 12px #000; color: #000; font-family: "Liberation Serif", serif; box-sizing: border-box; padding: 255px 0 0 165px; }
.title, .date { width: 1070px; text-align: center; display: flex; justify-content: center; }
.title { font-size: 39px; line-height: 50px; }
u { text-decoration: none; position: relative; top: 2px; margin: 0 3px 0 5px; }
u.sm { margin: 0 3px; top: 0; }
.date { font-size: 27px; line-height: 34px; margin-top: 56px; }
.h1 { font-size: 31px; line-height: 40px; font-weight: 700; margin-top: 56px; display: flex; }
.h1 span + span { margin-left: 39px; }
.by { font-size: 26px; line-height: 31px; font-weight: 700; margin-top: 22px; }
.h2 { font-size: 27px; line-height: 32px; font-weight: 700; margin-top: 34px; display: flex; }
.h2 > div { margin-left: 32px; }
ul { margin: 16px 0 0; padding: 0 0 0 62px; list-style: none; font-size: 26px; line-height: 31px; font-weight: 700; }
li { position: relative; }
li::before { content: ""; position: absolute; left: -24px; top: 13px; width: 10px; height: 10px; border-radius: 50%; background: #000; }
li > div, .by > div, .h2 > div > div { height: 31px; white-space: nowrap; }
.h2 > div > div { height: 32px; }
a { color: #0b28b5; }

.scroll { display: flex; justify-content: flex-end; }
.scroll::before { content: ""; width: 12px; height: 923px; background: #404040; order: 1; }
.scroll > div { width: 12px; height: 57px; background: #cfcfcf; margin-right: -12px; z-index: 1; order: 0; }

.viewer { display: flex; flex-direction: column; justify-content: space-between; z-index: 2; font-family: Inter, Roboto, sans-serif; }
.v-head { height: 72px; background: linear-gradient(rgba(0,0,0,.65), rgba(0,0,0,.52) 30%, rgba(0,0,0,.2) 72%, rgba(0,0,0,0)); display: flex; align-items: flex-start; padding-left: 22px; }
.v-back { width: 20px; height: 20px; margin-top: 18px; }
.v-pdf { width: 18px; height: 18px; border-radius: 2px; background: #ea4335; margin: 19px 11px 0 21px; padding-left: 2.5px; box-sizing: border-box; font-size: 8px; line-height: 18px; }
.v-name { font-family: Lato, sans-serif; font-weight: 700; font-size: 14px; line-height: 20px; margin-top: 17px; text-shadow: 0 1px 1px rgba(0,0,0,.4); }
.v-open { margin: 12px 0 0 344px; width: 95px; height: 32px; box-sizing: border-box; background: #262626; border: 1px solid #484848; border-radius: 2px; display: flex; align-items: center; padding-left: 8px; font-weight: 500; font-size: 13px; gap: 7px; }
.v-open span { margin-top: -1px; }
.v-open svg { width: 10px; height: 10px; margin-top: 3px; }
.v-print { width: 20px; height: 18px; margin: 19px 39px 0 auto; }
.v-dots { width: 18px; height: 18px; margin: 19px 23px 0 -10px; }
.v-bar { width: 266px; height: 44px; margin: 0 0 12px 827px; background: rgba(38,38,38,.87); border-radius: 3px; display: flex; align-items: center; font-size: 13px; font-weight: 500; }
.p-lab { width: 48px; box-sizing: border-box; padding-left: 12px; }
.p-in { width: 35px; height: 42px; line-height: 42px; background: rgba(20,20,20,.75); text-align: center; font-size: 12px; }
.p-sl { width: 17px; text-align: center; }
.p-tot { width: 33px; text-align: center; font-size: 12px; }
.p-btn { width: 40px; height: 44px; display: flex; align-items: center; justify-content: center; }
.p-btn.first { border-left: 1px solid #5a5a5a; margin-left: 8px; width: 43px; }
.p-btn:nth-child(6) { width: 37px; }
.p-btn svg { width: 18px; height: 18px; }
.p-btn .pl { width: 15px; height: 15px; }
.minus { width: 14px; height: 2px; background: #fff; }

.osd { display: flex; align-items: flex-end; justify-content: flex-end; z-index: 3; padding-bottom: 12px; box-sizing: border-box; }
.activate { width: 242px; color: rgba(150,150,150,.75); margin-bottom: 35px; }
.a1 { font-size: 19px; line-height: 25px; }
.a2 { font-size: 14px; line-height: 22px; }
.net { width: 79px; height: 39px; background: #215c1d; font-size: 14px; line-height: 18px; padding-top: 1px; box-sizing: border-box; }
.net div { display: flex; height: 18px; }
.net i { width: 11px; padding-left: 3px; color: #ff0; font-style: normal; font-size: 13px; font-family: "DejaVu Sans", sans-serif; }

.task { height: 48px; flex: none; background: linear-gradient(90deg, #efefef 93%, #dfeaf6); border-top: 1px solid #bdbdbd; box-sizing: border-box; display: flex; align-items: center; padding-bottom: 1px; color: #1c1c1c; }
.wx { width: 163px; padding-left: 9px; box-sizing: border-box; position: relative; }
.wx svg { width: 27px; height: 27px; }
.wx b { position: absolute; left: 21px; top: -3px; width: 16px; height: 16px; border-radius: 50%; background: #c42b1c; color: #fff; font: 11px/16px "Noto Sans", sans-serif; text-align: center; }
.start { width: 23px; height: 23px; margin-right: 14px; }
.search { width: 219px; height: 32px; box-sizing: border-box; border: 1px solid #d5d5d5; border-bottom-color: #bbb; border-radius: 16px; background: #fbfbfb; display: flex; align-items: center; padding-left: 10px; font-size: 13.5px; color: #555; }
.search > span { margin-top: -1px; }
.mg { width: 16px; height: 16px; margin-right: 9px; }
.sc { width: 45px; height: 26px; margin-left: auto; margin-right: 5px; }
.apps { display: flex; margin-left: 2px; }
.app { width: 44px; height: 46px; display: flex; align-items: center; justify-content: center; position: relative; }
.app svg { width: 24px; height: 24px; position: relative; }
.app b { position: absolute; left: 22px; top: 5px; min-width: 16px; height: 16px; border-radius: 9px; color: #fff; font: 11px/16px "Noto Sans", sans-serif; text-align: center; padding: 0 .5px; }
.app b.dark { color: #333; font: 8px/16px "DejaVu Sans", sans-serif; }
.app b.it { font-style: italic; font-weight: 700; }
.app.run::after, .app.active::after, .app.alert::after { content: ""; position: absolute; bottom: 3px; left: 19px; width: 6px; height: 3px; border-radius: 2px; background: #8a8a8a; }
.app.active::after { width: 16px; left: 14px; background: #0078d4; }
.app.alert::after { background: #c42b1c; }
.app.active::before, .app.alert::before { content: ""; position: absolute; left: 3px; top: 3px; width: 38px; height: 39px; background: #fafafa; border-radius: 4px; }
.app.alert::before { background: #fce4e4; }
.tray { flex: 1; display: flex; align-items: center; padding-left: 23px; }
.t1 { width: 11px; height: 11px; }
.t2 { width: 17px; height: 14px; margin-left: 18px; }
.lang { width: 40px; margin-left: 10px; display: flex; flex-direction: column; align-items: center; line-height: 16px; font-size: 12px; }
.t3 { width: 17px; height: 17px; margin-left: 9px; }
.t4 { width: 17px; height: 15px; margin-left: 7px; }
.clock { margin-left: auto; margin-right: 19px; display: flex; flex-direction: column; align-items: flex-end; line-height: 16px; font-size: 12px; }
</style>
